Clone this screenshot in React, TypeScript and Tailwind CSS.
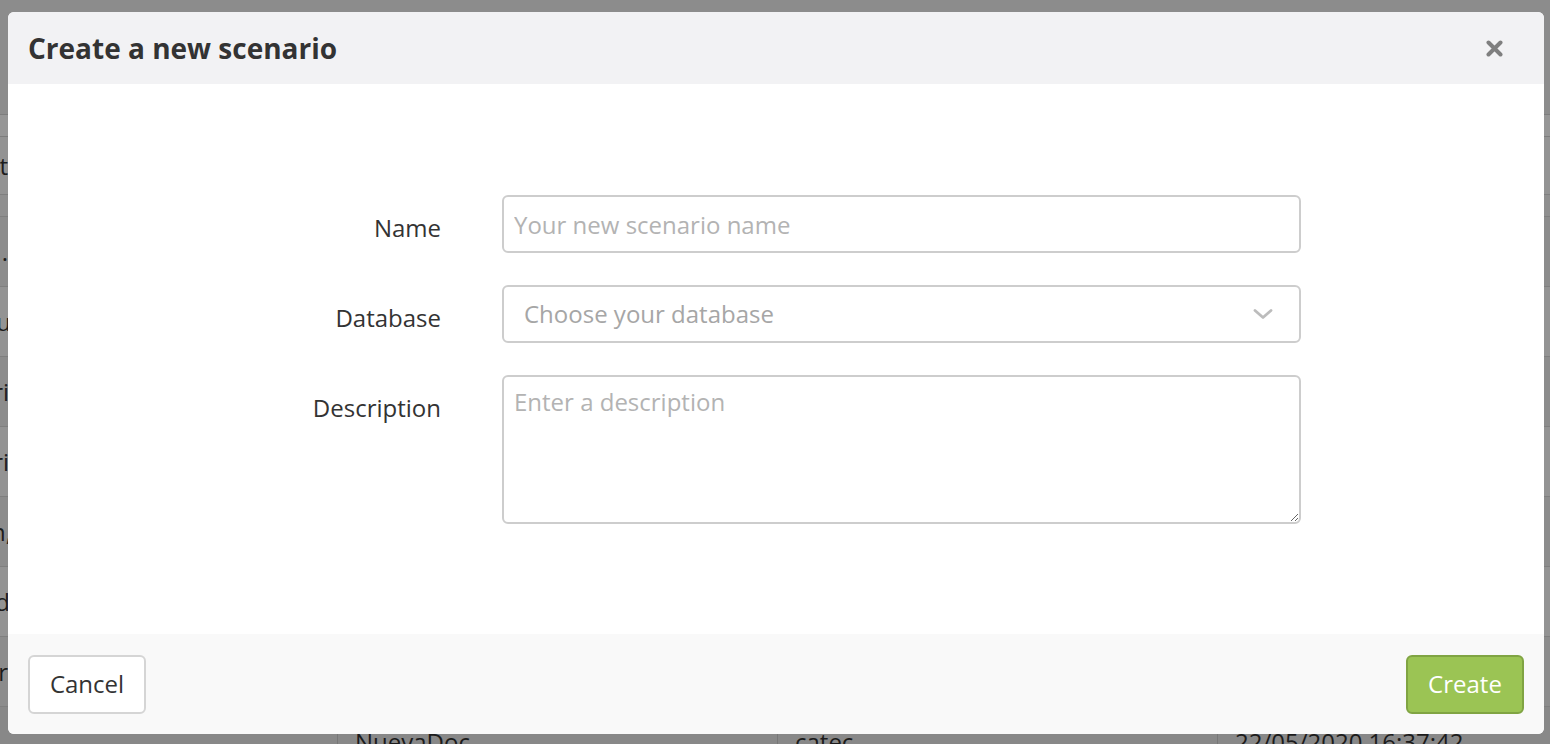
import React from "react";

const font = { fontFamily: '"Open Sans", "Noto Sans", Arial, sans-serif' };

// rows of the page behind the overlay; only a sliver at the left edge shows
const bgRows = [
  { h: "h-[70px]", tail: ".", rest: "csv", shade: "bg-[#8c8c8c]", w: "w-[8px]" },
  { h: "h-[70px]", tail: "u", rest: "ebas", shade: "bg-[#939393]", w: "w-[11px]" },
  { h: "h-[70px]", tail: "ri", rest: "o A", shade: "bg-[#8c8c8c]", w: "w-[9px]" },
  { h: "h-[70px]", tail: "ri", rest: "o B", shade: "bg-[#939393]", w: "w-[9px]" },
  { h: "h-[70px]", tail: "n,", rest: " test", shade: "bg-[#8c8c8c]", w: "w-[12px]" },
  { h: "h-[70px]", tail: "d", rest: "emo", shade: "bg-[#939393]", w: "w-[10px]" },
  { h: "h-[70px]", tail: "r", rest: "sion", shade: "bg-[#8c8c8c]", w: "w-[8px]" },
];

function BackgroundPage() {
  return (
    <div className="flex flex-col text-[24px] text-[#1c1c1c]">
      <div className="h-[115px] bg-[#8c8c8c] border-b border-[#7d7d7d]" />
      <div className="h-[22px] bg-[#969696] border-b border-[#7d7d7d]" />
      <div className="h-[58px] bg-[#939393] border-b border-[#7f7f7f] flex items-center">
        <div className="w-[8px] flex justify-end">
          <span className="whitespace-nowrap leading-[30px]">t</span>
        </div>
      </div>
      <div className="h-[22px] bg-[#8f8f8f] border-b border-[#7f7f7f]" />
      {bgRows.map((r, i) => (
        <div key={i} className={`${r.h} ${r.shade} border-b border-[#7f7f7f] flex items-center`}>
          <div className={`${r.w} flex justify-end`}>
            <span className="whitespace-nowrap leading-[30px]">{r.tail}</span>
          </div>
          <span className="whitespace-nowrap leading-[30px]">{r.rest}</span>
        </div>
      ))}
      <div className="h-[70px] bg-[#888888] flex items-start pt-[20px]">
        <div className="w-[337px]" />
        <div className="w-[440px] border-l border-[#777] pl-[17px] h-full leading-[30px]">NuevaDoc</div>
        <div className="w-[440px] border-l border-[#777] pl-[17px] h-full leading-[30px]">catec</div>
        <div className="flex-1 border-l border-[#777] pl-[17px] h-full leading-[30px]">22/05/2020 16:37:42</div>
      </div>
    </div>
  );
}

function Field({ label, children }: { label: string; children: React.ReactNode }) {
  return (
    <div className="flex items-start">
      <label className="w-[241px] text-right pt-[18px] text-[24px] leading-[30px] text-[#333]">{label}</label>
      <div className="ml-[61px] w-[799px]">{children}</div>
    </div>
  );
}

export default function App() {
  return (
    <div className="relative w-[1550px] h-[744px] overflow-hidden bg-[#8f8f8f]" style={font}>
      <BackgroundPage />

      {/* Modal */}
      <div className="absolute left-[8px] top-[12px] w-[1536px] h-[722px] bg-white rounded-[6px] overflow-hidden flex flex-col">
        <div className="h-[72px] bg-[#f2f2f4] flex items-center justify-between pl-[20px] pr-[41px]">
          <h2 className="text-[28px] font-bold text-[#333] leading-none">Create a new scenario</h2>
          <button className="w-[18px] h-[18px] flex items-center justify-center">
            <svg width="17" height="17" viewBox="0 0 17 17">
              <path d="M2.5 2.5 L14.5 14.5 M14.5 2.5 L2.5 14.5" stroke="#7f7f7f" strokeWidth="4" strokeLinecap="round" />
            </svg>
          </button>
        </div>

        <div className="flex-1 flex flex-col gap-[32px] pt-[111px] pl-[192px]">
          <Field label="Name">
            <input
              className="w-full h-[58px] border-2 border-[#cdcdcd] rounded-[6px] px-[10px] text-[24px] text-[#333] placeholder:text-[#b3b3b3] outline-none"
              placeholder="Your new scenario name"
            />
          </Field>
          <Field label="Database">
            <div className="w-full h-[58px] border-2 border-[#cdcdcd] rounded-[6px] pl-[20px] pr-[26px] flex items-center justify-between">
              <span className="text-[24px] text-[#a6a6a6]">Choose your database</span>
              <svg width="20" height="12" viewBox="0 0 20 12">
                <path d="M2 2.5 L10 9.5 L18 2.5" fill="none" stroke="#bcbcbc" strokeWidth="2.8" strokeLinecap="round" strokeLinejoin="round" />
              </svg>
            </div>
          </Field>
          <Field label="Description">
            <textarea
              className="block w-full h-[149px] border-2 border-[#cdcdcd] rounded-[6px] px-[10px] pt-[10px] text-[24px] leading-[30px] text-[#333] placeholder:text-[#b3b3b3] outline-none resize-y"
              placeholder="Enter a description"
            />
          </Field>
        </div>

        <div className="h-[100px] bg-[#f9f9f9] flex items-center justify-between px-[20px]">
          <button className="w-[118px] h-[59px] bg-white border-2 border-[#d5d5d5] rounded-[6px] text-[24px] text-[#333]">
            Cancel
          </button>
          <button className="w-[118px] h-[59px] bg-[#9bc454] border-2 border-[#80a443] rounded-[6px] text-[24px] text-white">
            Create
          </button>
        </div>
      </div>
    </div>
  );
}
